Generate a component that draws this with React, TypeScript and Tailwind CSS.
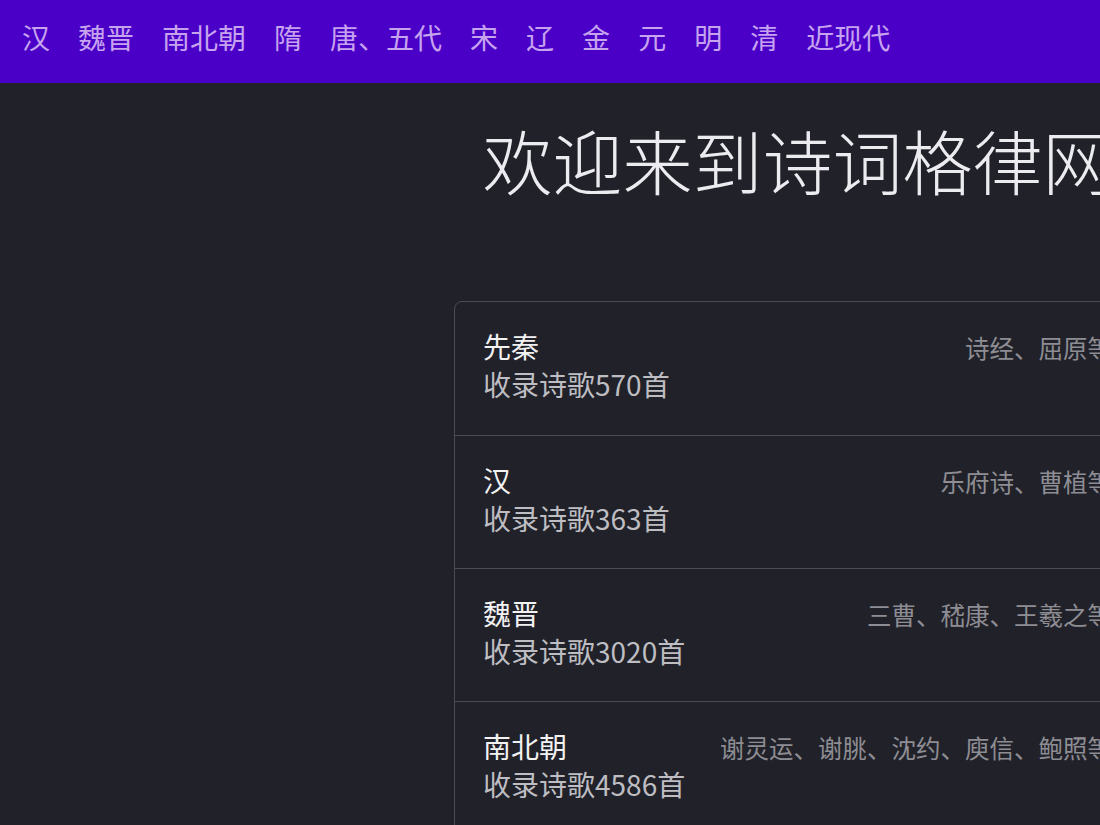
const eras = ["汉", "魏晋", "南北朝", "隋", "唐、五代", "宋", "辽", "金", "元", "明", "清", "近现代"];

const dynasties = [
  { name: "先秦", count: 570, poets: "诗经、屈原等" },
  { name: "汉", count: 363, poets: "乐府诗、曹植等" },
  { name: "魏晋", count: 3020, poets: "三曹、嵇康、王羲之等" },
  { name: "南北朝", count: 4586, poets: "谢灵运、谢朓、沈约、庾信、鲍照等" },
  { name: "隋", count: 432, poets: "杨广、卢思道等" },
];

export default function App() {
  return (
    <div className="h-[825px] w-[1100px] overflow-hidden bg-[#212129] font-['Noto_Sans_CJK_SC','Noto_Sans',sans-serif]">
      <nav className="flex h-[83px] items-start gap-[28px] bg-[#4b00c8] pl-[22px] pt-[17px]">
        {eras.map((era) => (
          <a key={era} className="text-[28px] leading-[40px] text-[#c6a3ee]">
            {era}
          </a>
        ))}
      </nav>

      <main className="flex pl-[454px]">
        <div className="w-[687px] shrink-0">
          <h1 className="mt-[36px] text-center text-[70px] font-light leading-[82px] text-[#ececf0]">
            欢迎来到诗词格律网
          </h1>

          <ul className="mt-[100px] rounded-lg border border-[#4a4b53]">
            {dynasties.map((d, i) => (
              <li
                key={d.name}
                className={`flex h-[133px] justify-between px-[28px] pt-[24px] ${i > 0 ? "border-t border-[#4a4b53]" : ""}`}
              >
                <div>
                  <div className="text-[28px] leading-[40px] text-[#f2f2f2]">{d.name}</div>
                  <div className="text-[28px] leading-[36px] text-[#bdbdc2]">收录诗歌{d.count}首</div>
                </div>
                <div className="pt-[2px] text-[24.5px] leading-[40px] text-[#8d8d93]">{d.poets}</div>
              </li>
            ))}
          </ul>
        </div>
      </main>
    </div>
  );
}
